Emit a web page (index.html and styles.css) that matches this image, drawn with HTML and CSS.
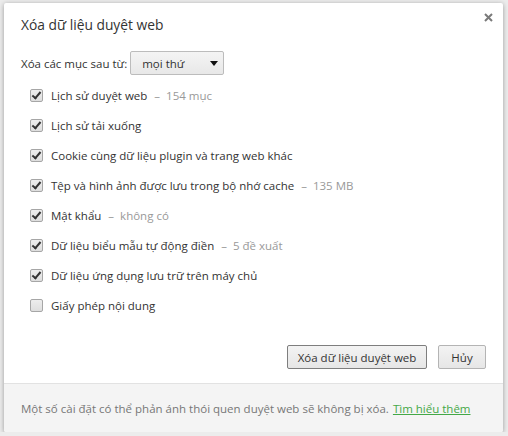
FILE: index.html
```html
<!DOCTYPE html>
<html lang="vi">
<head>
<meta charset="UTF-8" />
<title>Xóa dữ liệu duyệt web</title>
<link rel="stylesheet" href="styles.css">
</head>
<body>

<div class="dialog">
  <div class="dialog-head">
    <h1>Xóa dữ liệu duyệt web</h1>
    <button class="close" aria-label="Đóng">
      <svg width="9" height="9" viewBox="0 0 9 9"><path d="M1 1L8 8M8 1L1 8" stroke="#7a7a7a" stroke-width="2"/></svg>
    </button>
  </div>

  <div class="dialog-body">
    <div class="period">
      <span>Xóa các mục sau từ:</span>
      <div class="select">mọi thứ<span class="caret"></span></div>
    </div>

    <ul class="options">
      <li><span class="box on"></span>Lịch sử duyệt web<span class="extra">–&nbsp; 154 mục</span></li>
      <li><span class="box on"></span>Lịch sử tải xuống</li>
      <li><span class="box on"></span>Cookie cùng dữ liệu plugin và trang web khác</li>
      <li><span class="box on"></span>Tệp và hình ảnh được lưu trong bộ nhớ cache<span class="extra">–&nbsp; 135 MB</span></li>
      <li><span class="box on"></span>Mật khẩu<span class="extra">–&nbsp; không có</span></li>
      <li><span class="box on"></span>Dữ liệu biểu mẫu tự động điền<span class="extra">–&nbsp; 5 đề xuất</span></li>
      <li><span class="box on"></span>Dữ liệu ứng dụng lưu trữ trên máy chủ</li>
      <li><span class="box"></span>Giấy phép nội dung</li>
    </ul>

    <div class="actions">
      <button class="btn primary">Xóa dữ liệu duyệt web</button>
      <button class="btn">Hủy</button>
    </div>
  </div>

  <div class="dialog-foot">
    Một số cài đặt có thể phản ánh thói quen duyệt web sẽ không bị xóa. <a href="#">Tìm hiểu thêm</a>
  </div>
</div>

</body>
</html>
```

FILE: styles.css
```css
body {
  margin: 0;
  background: #ececec;
  font-family: 'Open Sans', 'Noto Sans', sans-serif;
  font-size: 11.5px;
  color: #333;
}

.dialog {
  margin: 3px 5px 0 4px;
  height: 429px;
  background: #fff;
  border-radius: 2px;
  box-shadow: 0 1px 5px rgba(0,0,0,0.35);
  display: flex;
  flex-direction: column;
  overflow: hidden;
}

.dialog-head {
  display: flex;
  justify-content: space-between;
  align-items: flex-start;
  padding: 12px 10px 0 17px;
}
.dialog-head h1 {
  margin: 0;
  font-size: 13.8px;
  font-weight: normal;
  line-height: 20px;
  color: #333;
}
.close {
  border: none;
  background: none;
  padding: 0;
  margin-top: -2px;
  width: 9px;
  height: 9px;
  display: flex;
  cursor: pointer;
}

.dialog-body {
  padding: 0 17px;
}

.period {
  display: flex;
  align-items: center;
  gap: 3px;
  margin-top: 16px;
}
.select {
  box-sizing: border-box;
  width: 94px;
  height: 24px;
  border: 1px solid #bcbcbc;
  border-radius: 2px;
  background: linear-gradient(#f4f4f4, #e8e8e8);
  display: flex;
  align-items: center;
  padding-left: 11px;
  position: relative;
}
.caret {
  position: absolute;
  right: 5px;
  top: 9px;
  border-left: 4px solid transparent;
  border-right: 4px solid transparent;
  border-top: 5px solid #111;
}

.options {
  list-style: none;
  margin: 5px 0 0;
  padding: 0 0 0 9px;
}
.options li {
  height: 30px;
  display: flex;
  align-items: center;
}
.box {
  width: 13px;
  height: 13px;
  box-sizing: border-box;
  border: 1px solid #a6a6a6;
  border-radius: 2px;
  background: linear-gradient(#ededed, #dedede);
  margin-right: 8px;
  position: relative;
}
.box.on::after {
  content: '';
  position: absolute;
  left: 3px;
  top: 0px;
  width: 3px;
  height: 7px;
  border-right: 2px solid #333;
  border-bottom: 2px solid #333;
  transform: rotate(40deg);
}
.extra {
  color: #999;
  margin-left: 7px;
}

.actions {
  display: flex;
  justify-content: flex-end;
  gap: 11px;
  margin: 25px 0 0;
}
.btn {
  font-family: inherit;
  font-size: 11.5px;
  color: #333;
  height: 24px;
  padding: 0;
  white-space: nowrap;
  border: 1px solid #b4b4b4;
  border-radius: 2px;
  background: linear-gradient(#f3f3f3, #e6e6e6);
  width: 48px;
}
.btn.primary {
  border-color: #7e7e7e;
  width: 140px;
}

.dialog-foot {
  margin-top: auto;
  height: 48px;
  border-top: 1px solid #e2e2e2;
  background: #f4f4f4;
  display: flex;
  align-items: center;
  padding-left: 17px;
  color: #777;
}
.dialog-foot a {
  color: #44a847;
  margin-left: 4px;
}
```
